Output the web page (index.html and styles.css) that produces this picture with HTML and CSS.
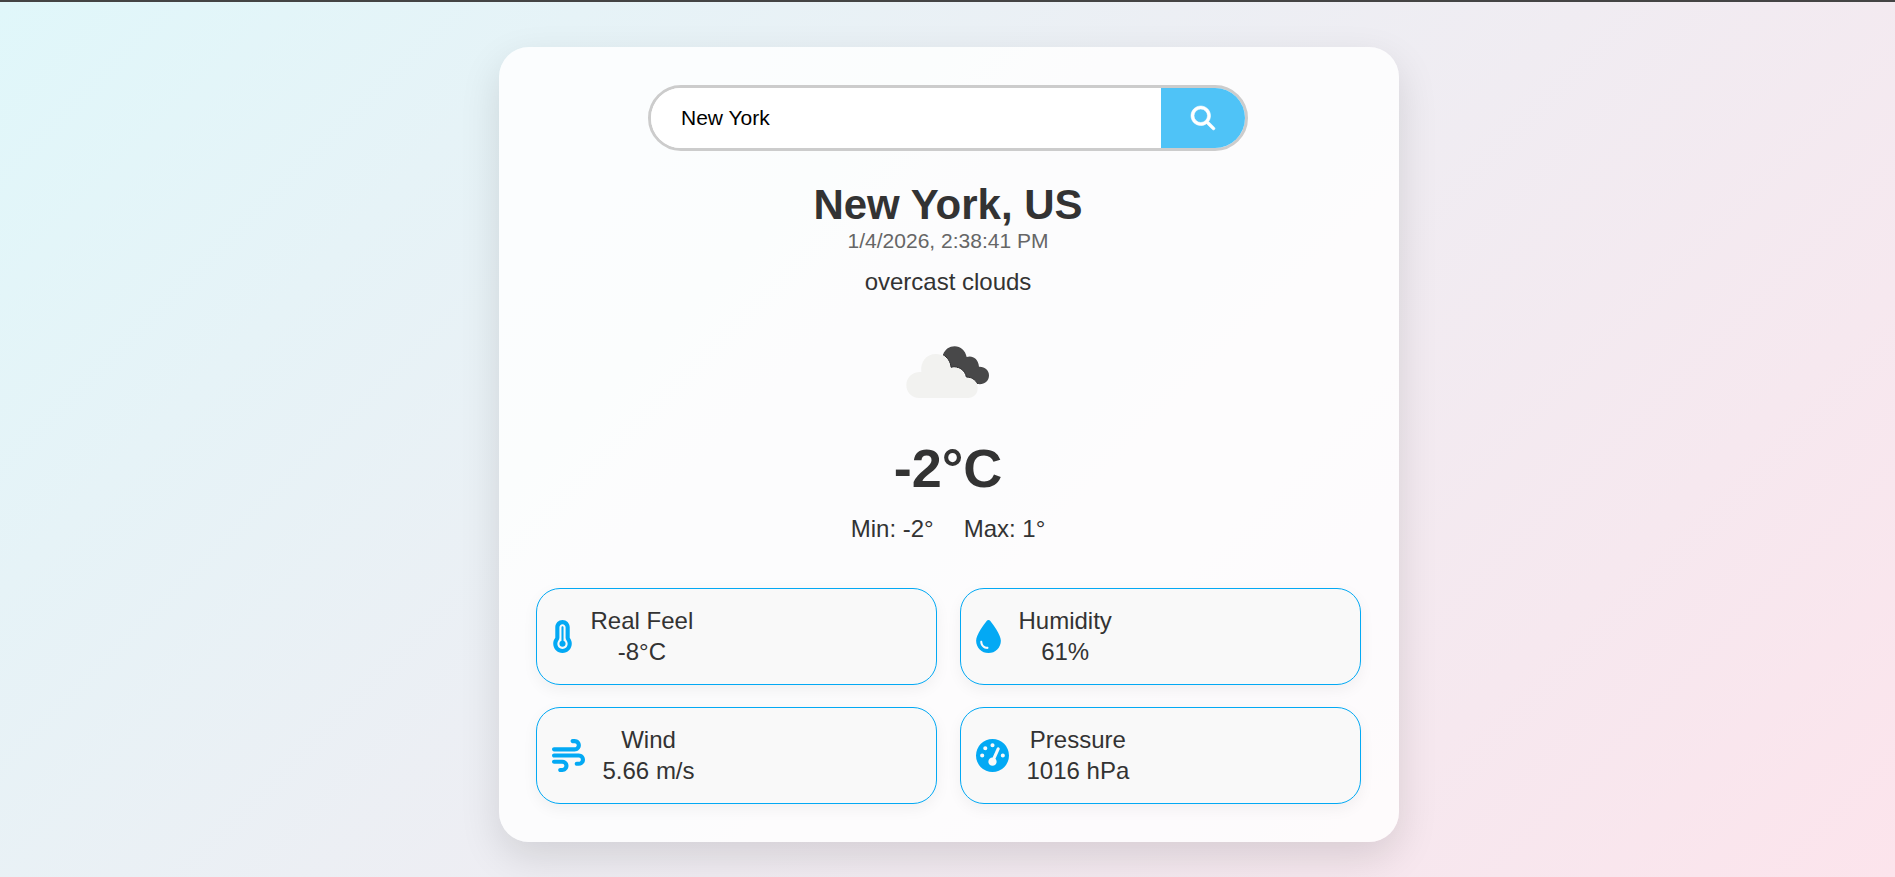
FILE: index.html
```html
<!DOCTYPE html>
<html lang="en">
<head>
  <meta charset="UTF-8">
  <meta name="viewport" content="width=device-width, initial-scale=1.0">
  <title>Weather App</title>
  <link rel="stylesheet" href="styles.css">
</head>
<body>
  <main class="container">
    <!-- Search -->
    <form class="search-box">
      <input type="text" id="city" value="New York" placeholder="Enter city" aria-label="City">
      <button type="submit" aria-label="Search">
        <svg viewBox="0 0 512 512"><path d="M416 208c0 45.900-14.900 88.300-40 122.700L502.600 457.400c12.500 12.500 12.500 32.800 0 45.300s-32.800 12.500-45.300 0L330.700 376c-34.400 25.200-76.800 40-122.700 40C93.100 416 0 322.900 0 208S93.100 0 208 0S416 93.100 416 208zM208 352a144 144 0 1 0 0-288 144 144 0 1 0 0 288z"/></svg>
      </button>
    </form>

    <!-- Current weather -->
    <h1 class="city">New York, US</h1>
    <p class="date">1/4/2026, 2:38:41 PM</p>
    <p class="description">overcast clouds</p>
    <svg class="weather-icon" viewBox="0 0 420 300" role="img" aria-label="overcast clouds">
      <path fill="#484849" d="M195 101C202 84 214 76 230 76C248 76 262 89 266 108C282 102 301 112 303 137C320 136 333 147 333 163C333 181 318 192 299 189C291 176 281 169 265 168C261 147 242 134 219 139C217 121 208 109 195 101Z"/>
      <path fill="none" stroke="#303031" stroke-width="3" d="M195 101C208 109 217 121 219 139C242 134 261 147 265 168C281 169 291 176 299 189"/>
      <path fill="#f2f2f0" d="M124 231C101 231 85 214 85 192C85 169 104 151 130 153C126 123 145 99 173 99C199 99 217 118 217 142C238 134 259 147 262 172C283 168 299 182 299 202C299 219 287 231 270 231Z"/>
    </svg>
    <h2 class="temp">-2°C</h2>
    <div class="min-max">
      <span>Min: -2°</span>
      <span>Max: 1°</span>
    </div>

    <!-- Details -->
    <div class="details">
      <div class="card">
        <svg class="narrow" viewBox="0 0 320 512"><path d="M160 64c-26.500 0-48 21.500-48 48l0 164.500c0 17.300-7.100 31.900-15.300 42.500C86.200 332.600 80 349.500 80 368c0 44.200 35.800 80 80 80s80-35.800 80-80c0-18.500-6.200-35.400-16.700-48.900c-8.200-10.600-15.300-25.200-15.300-42.500L208 112c0-26.500-21.500-48-48-48zM48 112C48 50.200 98.100 0 160 0s112 50.100 112 112l0 164.400c0 .1 .1 .3 .2 .6c.2 .6 .8 1.600 1.700 2.800c18.900 24.400 30.100 55 30.100 88.100c0 79.500-64.500 144-144 144S16 447.500 16 368c0-33.200 11.200-63.800 30.100-88.100c.9-1.200 1.500-2.200 1.700-2.800c.1-.3 .2-.5 .2-.6L48 112zM208 368c0 26.500-21.500 48-48 48s-48-21.500-48-48c0-20.900 13.400-38.700 32-45.300L144 112c0-8.800 7.200-16 16-16s16 7.200 16 16l0 210.700c18.600 6.600 32 24.400 32 45.300z"/></svg>
        <div>
          <p>Real Feel</p>
          <p>-8°C</p>
        </div>
      </div>
      <div class="card">
        <svg class="medium" viewBox="0 0 384 512"><path d="M192 512C86 512 0 426 0 320C0 228.800 130.200 57.700 166.600 11.700C172.600 4.200 181.500 0 191.100 0l1.800 0c9.600 0 18.500 4.200 24.500 11.700C253.800 57.700 384 228.800 384 320c0 106-86 192-192 192zM96 336c0-8.800-7.200-16-16-16s-16 7.200-16 16c0 61.900 50.100 112 112 112c8.800 0 16-7.200 16-16s-7.200-16-16-16c-44.200 0-80-35.800-80-80z"/></svg>
        <div>
          <p>Humidity</p>
          <p>61%</p>
        </div>
      </div>
      <div class="card">
        <svg viewBox="0 0 512 512"><path d="M288 32c0 17.700 14.300 32 32 32l32 0c17.700 0 32 14.300 32 32s-14.300 32-32 32L32 128c-17.700 0-32 14.300-32 32s14.300 32 32 32l320 0c53 0 96-43 96-96s-43-96-96-96L320 0c-17.700 0-32 14.300-32 32zm64 352c0 17.700 14.300 32 32 32l32 0c53 0 96-43 96-96s-43-96-96-96L32 224c-17.700 0-32 14.300-32 32s14.300 32 32 32l384 0c17.700 0 32 14.300 32 32s-14.300 32-32 32l-32 0c-17.700 0-32 14.300-32 32zM128 512l32 0c53 0 96-43 96-96s-43-96-96-96L32 320c-17.700 0-32 14.300-32 32s14.300 32 32 32l128 0c17.700 0 32 14.300 32 32s-14.300 32-32 32l-32 0c-17.700 0-32 14.300-32 32s14.300 32 32 32z"/></svg>
        <div>
          <p>Wind</p>
          <p>5.66 m/s</p>
        </div>
      </div>
      <div class="card">
        <svg viewBox="0 0 512 512"><path d="M0 256a256 256 0 1 1 512 0A256 256 0 1 1 0 256zM288 96a32 32 0 1 0 -64 0 32 32 0 1 0 64 0zM256 416c35.300 0 64-28.700 64-64c0-17.400-6.900-33.100-18.100-44.600L366 161.700c5.300-12.100-.2-26.300-12.300-31.600s-26.300 .2-31.600 12.300L257.900 288c-.6 0-1.300 0-1.900 0c-35.300 0-64 28.700-64 64s28.700 64 64 64zM176 144a32 32 0 1 0 -64 0 32 32 0 1 0 64 0zM96 288a32 32 0 1 0 0-64 32 32 0 1 0 0 64zm352-32a32 32 0 1 0 -64 0 32 32 0 1 0 64 0z"/></svg>
        <div>
          <p>Pressure</p>
          <p>1016 hPa</p>
        </div>
      </div>
    </div>
  </main>
</body>
</html>
```
FILE: styles.css
```css
* {
  margin: 0;
  padding: 0;
  box-sizing: border-box;
}

body {
  font-family: Arial, "Liberation Sans", sans-serif;
  min-height: 100vh;
  padding: 45px 0 36px 2px;
  border-top: 2px solid #444;
  background: linear-gradient(135deg, #e0f7fa, #fce4ec);
  background-origin: border-box;
  color: #333;
}

.container {
  max-width: 900px;
  margin: 0 auto;
  padding: 38px 38px 38px 37px;
  border-radius: 30px;
  background: rgba(255, 255, 255, 0.82);
  box-shadow: 0 15px 40px rgba(0, 0, 0, 0.12);
  text-align: center;
}

.search-box {
  display: flex;
  max-width: 600px;
  height: 66px;
  margin: 0 auto 30px;
  border: 3px solid #ccc;
  border-radius: 50px;
  background: #fff;
  overflow: hidden;
}

.search-box input {
  flex: 1;
  min-width: 0;
  padding: 0 30px;
  border: none;
  outline: none;
  background: #fff;
  color: #000;
  font-family: inherit;
  font-size: 21px;
}

.search-box button {
  display: flex;
  align-items: center;
  justify-content: center;
  width: 84px;
  border: none;
  background: #4fc3f7;
  cursor: pointer;
}

.search-box svg {
  width: 24px;
  height: 24px;
  fill: #fff;
  stroke: #fff;
  stroke-width: 12;
  overflow: visible;
}

.city {
  font-size: 42px;
  line-height: 48px;
}

.date {
  color: #666;
  font-size: 21px;
  line-height: 24px;
}

.description {
  margin-top: 15px;
  font-size: 24px;
  line-height: 28px;
}

.weather-icon {
  display: block;
  width: 140px;
  height: 100px;
  margin: 25px auto 15px;
}

.temp {
  font-size: 54px;
  line-height: 64px;
}

.min-max {
  display: flex;
  justify-content: center;
  gap: 30px;
  margin-top: 15px;
  font-size: 24px;
  line-height: 28px;
}

.details {
  display: grid;
  grid-template-columns: 1fr 1fr;
  gap: 22px 23px;
  margin-top: 45px;
}

.card {
  display: flex;
  align-items: center;
  gap: 18px;
  padding: 16px 15px 17px;
  border: 1px solid #03a9f4;
  border-radius: 24px;
  background: #f9f9f9;
  box-shadow: 0 5px 15px rgba(0, 0, 0, 0.05);
  font-size: 24px;
  line-height: 31px;
}

.card svg {
  width: 33px;
  height: 33px;
  fill: #03a9f4;
}

.card .narrow {
  width: 21px;
}

.card .medium {
  width: 25px;
}
```
